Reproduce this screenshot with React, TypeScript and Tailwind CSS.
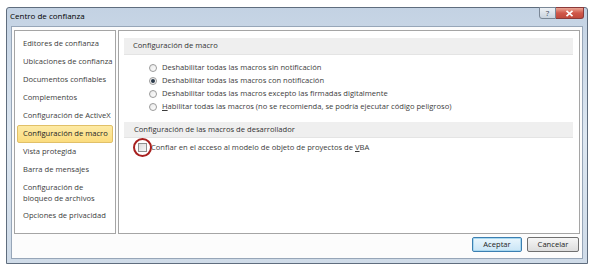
import React from "react";

const font = { fontFamily: '"Open Sans", "Noto Sans", Arial, sans-serif' };

function Radio({ checked }: { checked?: boolean }) {
  return (
    <span className="w-[8px] h-[8px] rounded-full border border-[#9a9a9a] bg-gradient-to-br from-[#e8e8e8] to-[#ffffff] flex items-center justify-center shrink-0">
      {checked && <span className="w-[4px] h-[4px] rounded-full bg-[#2a3a4a]" />}
    </span>
  );
}

const leftItems: { label: string[]; selected?: boolean }[] = [
  { label: ["Editores de confianza"] },
  { label: ["Ubicaciones de confianza"] },
  { label: ["Documentos confiables"] },
  { label: ["Complementos"] },
  { label: ["Configuración de ActiveX"] },
  { label: ["Configuración de macro"], selected: true },
  { label: ["Vista protegida"] },
  { label: ["Barra de mensajes"] },
  { label: ["Configuración de", "bloqueo de archivos"] },
  { label: ["Opciones de privacidad"] },
];

const radios = [
  { text: "Deshabilitar todas las macros sin notificación" },
  { text: "Deshabilitar todas las macros con notificación", checked: true },
  { text: "Deshabilitar todas las macros excepto las firmadas digitalmente" },
  { text: "Habilitar todas las macros (no se recomienda, se podría ejecutar código peligroso)", u: true },
];

export default function App() {
  return (
    <div className="w-[600px] h-[271px] bg-white pt-[7px] pl-[6px]" style={font}>
      <div className="w-[582px] h-[257px] border border-[#5f6d7e] rounded-t-[3px] bg-gradient-to-b from-[#c3d2e3] via-[#dde7f1] to-[#cfdbe8] flex flex-col relative">
        {/* title bar */}
        <div className="h-[18px] flex items-center pl-[3px] pb-[2px] text-[8px] text-black">
          Centro de confianza
        </div>
        <div className="absolute top-[-1px] right-[3px] flex">
          <div className="w-[17px] h-[12px] border border-[#7a8796] rounded-bl-[3px] bg-gradient-to-b from-[#eef2f6] to-[#c9d3de] flex items-center justify-center text-[8px] text-[#3b4a5a] leading-none">?</div>
          <div className="w-[28px] h-[12px] border border-l-0 border-[#8a3a3a] rounded-br-[3px] bg-gradient-to-b from-[#e8a494] via-[#d0574a] to-[#c04a3c] flex items-center justify-center">
            <svg width="9" height="7" viewBox="0 0 9 7">
              <path d="M1.5 0.8 L7.5 6.2 M7.5 0.8 L1.5 6.2" stroke="#ffffff" strokeWidth="1.6" />
            </svg>
          </div>
        </div>
        {/* client area */}
        <div className="mx-[4px] mb-[4px] flex-1 border border-[#97a6b8] bg-[#fcfcfc] flex flex-col px-[2px] pt-[3px]">
          <div className="flex gap-[2px] h-[204px]">
            {/* left panel */}
            <div className="w-[102px] border border-[#a5a5a5] bg-white pt-[4px] px-[2px] flex flex-col text-[7.6px] text-[#3c3c3c]">
              {leftItems.map((it, i) => (
                <div
                  key={i}
                  className={
                    it.selected
                      ? "h-[18px] flex items-center pl-[5px] border border-[#e1c068] rounded-[2px] bg-gradient-to-b from-[#fdeaa4] to-[#fbdc7e] text-[#222] whitespace-nowrap"
                      : it.label.length > 1
                      ? "py-[3px] pl-[6px] leading-[11px]"
                      : "h-[18px] flex items-center pl-[6px] whitespace-nowrap"
                  }
                >
                  {it.label.length > 1 ? (
                    <div>
                      {it.label.map((l, j) => (
                        <div key={j}>{l}</div>
                      ))}
                    </div>
                  ) : (
                    it.label[0]
                  )}
                </div>
              ))}
            </div>
            {/* right panel */}
            <div className="flex-1 border border-[#a5a5a5] bg-white pt-[7px] pl-[5px] pr-[6px] text-[7.6px] text-[#3c3c3c]">
              <div className="h-[17px] bg-[#efefef] border-b border-[#e4e4e4] flex items-center pl-[9px] text-[#333]">
                Configuración de macro
              </div>
              <div className="pt-[6px] pl-[25px] flex flex-col">
                {radios.map((r, i) => (
                  <div key={i} className="h-[13px] flex items-center gap-[5px] whitespace-nowrap">
                    <Radio checked={r.checked} />
                    <span>
                      {r.u ? (
                        <>
                          <span className="underline">H</span>
                          {r.text.slice(1)}
                        </>
                      ) : (
                        r.text
                      )}
                    </span>
                  </div>
                ))}
              </div>
              <div className="mt-[9px] h-[16px] bg-[#efefef] border-b border-[#e4e4e4] flex items-center pl-[10px] text-[#333]">
                Configuración de las macros de desarrollador
              </div>
              <div className="mt-[3px] pl-[14px] h-[13px] flex items-center gap-[4px]">
                <span className="relative w-[9px] h-[9px] border border-[#8e8f8f] bg-gradient-to-br from-[#dcdcdc] to-[#f8f8f8] shrink-0">
                  <span className="absolute left-[-6px] top-[-6px] w-[19px] h-[19px] rounded-full border-[2px] border-[#a8201f]" />
                </span>
                <span>
                  Confiar en el acceso al modelo de objeto de proyectos de <span className="underline">V</span>BA
                </span>
              </div>
            </div>
          </div>
          {/* buttons */}
          <div className="flex justify-end gap-[5px] pt-[3px] pr-[1px] text-[7.6px] text-[#222]">
            <div className="w-[50px] h-[15px] rounded-[2px] border border-[#3c7fb1] bg-gradient-to-b from-[#eaf6fd] to-[#c9e5f6] flex items-center justify-center shadow-[inset_0_0_0_1px_#a8d8f0]">
              Aceptar
            </div>
            <div className="w-[52px] h-[15px] rounded-[2px] border border-[#707070] bg-gradient-to-b from-[#f6f6f6] to-[#dddddd] flex items-center justify-center">
              Cancelar
            </div>
          </div>
        </div>
      </div>
    </div>
  );
}
